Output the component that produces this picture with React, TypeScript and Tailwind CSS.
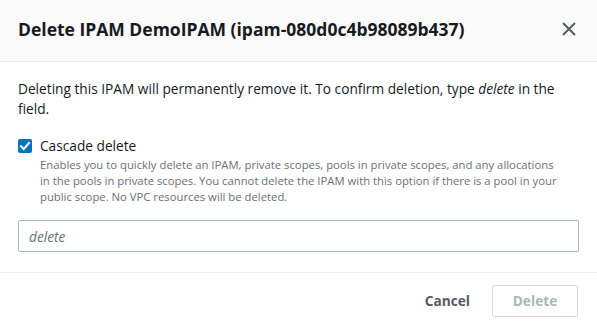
export default function App() {
  return (
    <div
      className="h-[328px] w-[597px] bg-white text-[#16191f]"
      style={{ fontFamily: '"Open Sans", Arial, sans-serif' }}
    >
      <header className="flex h-[62px] items-center justify-between border-b border-[#eaeded] bg-[#fafafa] pb-[3px] pl-[18px] pr-[21px]">
        <h2 className="text-[17.5px] font-bold leading-[22px]">
          Delete IPAM DemoIPAM (ipam-080d0c4b98089b437)
        </h2>
        <button className="flex h-[14px] w-[14px] items-center justify-center" aria-label="Close">
          <svg viewBox="0 0 14 14" className="h-[14px] w-[14px]">
            <path d="M1 1 L13 13 M13 1 L1 13" stroke="#545b64" strokeWidth="2" fill="none" />
          </svg>
        </button>
      </header>

      <div className="px-[18px] pt-[17px] pb-[20px]">
        <p className="text-[13.7px] leading-[20px]">
          Deleting this IPAM will permanently remove it. To confirm deletion, type{" "}
          <em>delete</em> in the field.
        </p>

        <div className="mt-[16px] flex gap-[8px]">
          <span className="mt-[4px] flex h-[14px] w-[14px] flex-none items-center justify-center rounded-[2px] bg-[#0073bb]">
            <svg viewBox="0 0 14 14" className="h-[14px] w-[14px]">
              <path
                d="M3 7.2 L5.8 10 L11 4"
                fill="none"
                stroke="white"
                strokeWidth="2"
                strokeLinecap="square"
              />
            </svg>
          </span>
          <div>
            <p className="text-[13.7px] leading-[22px]">Cascade delete</p>
            <p className="max-w-[525px] text-[11.3px] leading-[16px] text-[#687078]">
              Enables you to quickly delete an IPAM, private scopes, pools in private scopes, and any
              allocations in the pools in private scopes. You cannot delete the IPAM with this option
              if there is a pool in your public scope. No VPC resources will be deleted.
            </p>
          </div>
        </div>

        <input
          className="mt-[15px] h-[32px] w-full rounded-[2px] border border-[#aab7b8] px-[10px] text-[13.7px] italic outline-none placeholder:text-[#687078]"
          placeholder="delete"
        />
      </div>

      <footer className="flex items-center justify-end gap-[22px] border-t border-[#eaeded] px-[19px] pt-[12px]">
        <button className="text-[13.7px] font-bold text-[#545b64]">Cancel</button>
        <button className="h-[32px] w-[86px] rounded-[2px] border border-[#d5dbdb] text-[13.7px] font-bold text-[#aab7b8]">
          Delete
        </button>
      </footer>
    </div>
  );
}
